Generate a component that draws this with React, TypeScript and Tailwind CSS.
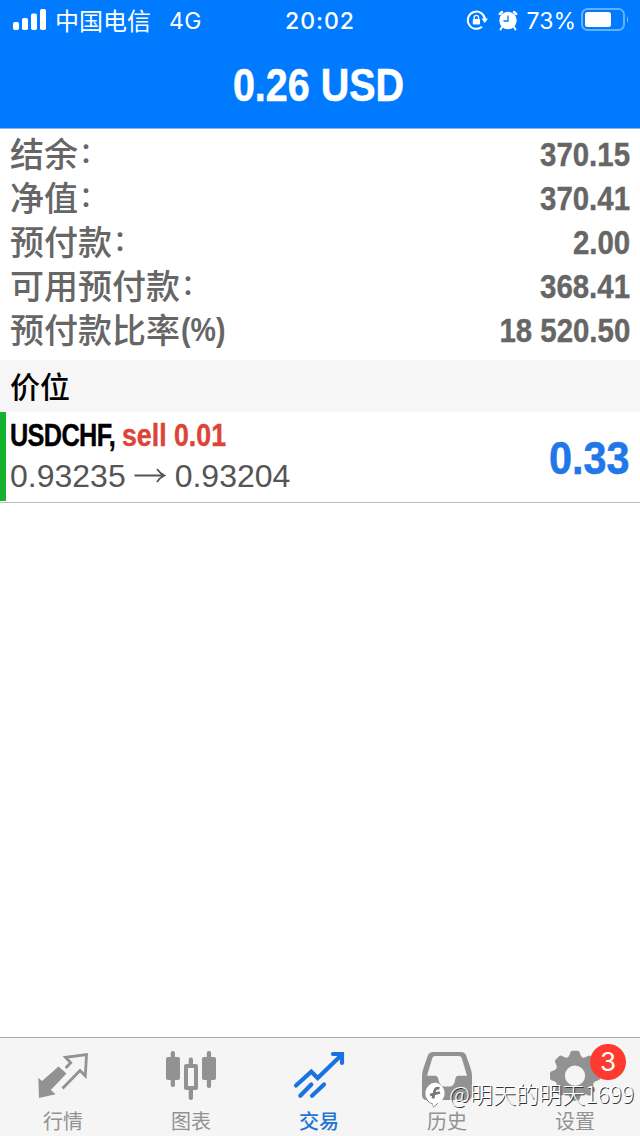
import React from 'react';

const SANS = "font-['Liberation_Sans','Noto_Sans_CJK_SC',sans-serif]";
const GEAR_TEETH = [0, 45, 90, 135, 180, 225, 270, 315];

const balances = [
  { label: '结余', colon: true, value: '370.15' },
  { label: '净值', colon: true, value: '370.41' },
  { label: '预付款', colon: true, value: '2.00' },
  { label: '可用预付款', colon: true, value: '368.41' },
  { label: '预付款比率', colon: false, value: '18 520.50' },
];

const StatusBar: React.FC = () => (
  <div className="flex h-10 items-center justify-between pr-[11px] pl-[13px] text-white">
    <div className="flex w-[230px] items-center">
      <svg width="34" height="22" viewBox="0 0 34 22" fill="currentColor">
        <rect x="0" y="13" width="6" height="8" rx="1.8" />
        <rect x="9" y="9" width="6" height="12" rx="1.8" />
        <rect x="18" y="4.500" width="6" height="16.500" rx="1.800" />
        <rect x="27" y="0" width="6" height="21" rx="1.8" />
      </svg>
      <span className="ml-2 font-['Noto_Sans_CJK_SC',sans-serif] text-[24px] leading-10 whitespace-nowrap">
        中国电信
      </span>
      <span className="mt-0.5 ml-[18px] font-['Inter',sans-serif] text-[23px] leading-10 tracking-[0.5px]">4G</span>
    </div>
    <span className="mt-0.5 -ml-0.5 font-['Inter',sans-serif] text-[23px] leading-10 font-medium tracking-[1px]">20:02</span>
    <div className="flex w-[230px] items-center justify-end">
      <svg width="22" height="22" viewBox="0 0 22 22" fill="none">
        <path d="M19 10.500 A8.600 8.600 0 1 0 16 17.800" stroke="currentColor" strokeWidth="2" />
        <path d="M15.500 9.500 H22 L18.800 14 Z" fill="currentColor" />
        <rect x="6.800" y="10" width="7.200" height="5.500" rx="0.800" fill="currentColor" />
        <path d="M8.200 10.500 V8.500 a2.200 2.200 0 0 1 4.400 0 V10.500" stroke="currentColor" strokeWidth="1.300" />
      </svg>
      <svg className="ml-2.5" width="20" height="21" viewBox="0 0 20 21" fill="none">
        <circle cx="10" cy="10.500" r="8.700" fill="currentColor" />
        <path d="M1.800 4 L4 2 M18.200 4 L16 2" stroke="currentColor" strokeWidth="2.400" strokeLinecap="round" />
        <path d="M4 17 L2.500 19.500 M16 17 L17.500 19.500" stroke="currentColor" strokeWidth="2" strokeLinecap="round" />
        <path d="M10 5.500 V11 H5.500" stroke="#007aff" strokeWidth="1.300" />
      </svg>
      <span className="mt-0.5 ml-[9px] font-['Inter',sans-serif] text-[23px] leading-10">73%</span>
      <svg className="ml-[5px]" width="48" height="24" viewBox="0 0 48 24">
        <rect x="1" y="1" width="42" height="21" rx="5.500" fill="none" stroke="#fff" strokeOpacity="0.400" strokeWidth="2" />
        <rect x="4" y="4" width="26" height="15" rx="2.500" fill="#fff" />
        <path d="M46 8 Q48 11.500 46 15 Z" fill="#fff" fillOpacity="0.500" />
      </svg>
    </div>
  </div>
);

const QuotesIcon = () => (
  <svg width="128" height="66" viewBox="0 0 128 66" fill="none">
    <path d="M38.300 39.700 L42 43 L58.500 28.500 L66.500 35.500 L50.800 52 L55.500 56.300 L39 60 Z" fill="#929292" />
    <path d="M65.700 30 L70.700 24.700 L65.500 19.300 L86.500 16.500 L85.300 38 L80 32.500 L62.500 50.500" stroke="#929292" strokeWidth="2.800" />
  </svg>
);

const ChartsIcon = () => (
  <svg width="128" height="66" viewBox="0 0 128 66" fill="#929292">
    <rect x="42.700" y="13" width="4.300" height="36" rx="2" />
    <rect x="38" y="19" width="14" height="23" rx="2" />
    <rect x="60.700" y="19.500" width="4.300" height="10" rx="2" />
    <rect x="60.700" y="48" width="4.300" height="14" rx="2" />
    <path fillRule="evenodd" d="M58 26 h10 a2 2 0 0 1 2 2 v22 a2 2 0 0 1 -2 2 h-10 a2 2 0 0 1 -2 -2 v-22 a2 2 0 0 1 2 -2 Z M60 30 v18 h6 v-18 Z" />
    <rect x="78.800" y="13" width="4.300" height="37" rx="2" />
    <rect x="74" y="19" width="14" height="23" rx="2" />
  </svg>
);

const TradeIcon = () => (
  <svg width="128" height="66" viewBox="0 0 128 66" fill="none" stroke="#1a73e0" strokeWidth="4.200" strokeLinecap="round">
    <path d="M40 47.500 L55.300 33.700 L61.700 40 L85.500 17" />
    <path d="M77 16 H86 V25" />
    <path d="M44.300 57.700 L55.300 46.500 M56 57.700 L68 46.500" />
  </svg>
);

const HistoryIcon = () => (
  <svg width="128" height="66" viewBox="0 0 128 66">
    <path
      fill="#929292"
      fillRule="evenodd"
      d="M49 14 H77 Q80.500 14 82 17 L86.500 30 Q88 34 88 38 V57 Q88 62 83 62 H43 Q38 62 38 57 V38 Q38 34 39.500 30 L44 17 Q45.500 14 49 14 Z M51 18 Q49 18 48.300 20 L43 37.700 H51 Q53.500 37.700 54 40 Q55.500 48.500 60 48.500 H66 Q70.500 48.500 71.500 40 Q72 37.700 74.500 37.700 H83 L77.700 20 Q77 18 75 18 Z"
    />
  </svg>
);

const SettingsIcon = () => (
  <svg width="128" height="66" viewBox="0 0 128 66">
    <g transform="translate(63 37.700)" fill="#929292">
      {GEAR_TEETH.map((angle) => (
        <path key={angle} transform={`rotate(${angle})`} d="M-9 -17 Q-5.500 -19 -4.800 -23 Q-4.300 -25 -2.500 -25 H2.500 Q4.300 -25 4.800 -23 Q5.500 -19 9 -17 Z" />
      ))}
      <circle r="14.800" fill="none" stroke="#929292" strokeWidth="9.400" />
    </g>
  </svg>
);

const tabs = [
  { label: '行情', Icon: QuotesIcon, active: false },
  { label: '图表', Icon: ChartsIcon, active: false },
  { label: '交易', Icon: TradeIcon, active: true },
  { label: '历史', Icon: HistoryIcon, active: false },
  { label: '设置', Icon: SettingsIcon, active: false, badge: 3 },
];

const TabBar: React.FC = () => (
  <nav className="relative grid h-[99px] grid-cols-5 border-t border-[#adadad] bg-[#f5f5f5]">
    {tabs.map(({ label, Icon, active, badge }) => (
      <div key={label} className="relative flex flex-col items-center">
        <Icon />
        <span
          className={`-mt-px -ml-0.5 font-['Noto_Sans_CJK_SC',sans-serif] text-[20px] leading-9 ${
            active ? 'font-medium text-[#2275d3]' : 'text-[#929292]'
          }`}
        >
          {label}
        </span>
        {badge && (
          <span className="absolute top-1.5 left-[78px] flex size-9 items-center justify-center rounded-full bg-[#ff3b30] font-['Inter',sans-serif] text-[26px] leading-9 text-white">
            {badge}
          </span>
        )}
      </div>
    ))}
    <div className="absolute top-10 left-[423px] flex items-center">
      <svg width="24" height="30" viewBox="0 0 24 30">
        <path d="M3 21 Q6 25 10 26 L10.500 29 L15 25" fill="none" stroke="#777" strokeWidth="1" />
        <path d="M12 4.500 a11 10.800 0 0 1 2 21 L10 28.500 V25.500 A11 10.800 0 0 1 12 4.500 Z" fill="#fff" />
        <path d="M16.500 10.500 Q12.500 9 11.500 13.500 L10 20.500 M7 17 L17 14.500" fill="none" stroke="#777" strokeWidth="2.800" />
      </svg>
      <span className="ml-0.5 font-['Noto_Sans_CJK_SC',sans-serif] text-[23px] leading-7 font-light whitespace-nowrap text-white [text-shadow:1px_1px_0.5px_#333]">
        @明天的明天1699
      </span>
    </div>
  </nav>
);

const App: React.FC = () => {
  return (
    <div className={`flex h-[1136px] w-[640px] flex-col overflow-hidden bg-white ${SANS}`}>
      <header className="h-[129px] border-b border-[#8db6e6] bg-[#007aff]">
        <StatusBar />
        <h1 className="-mt-px -ml-[3px] flex h-[92px] scale-x-[.84] items-center justify-center text-[47px] font-bold text-white [-webkit-text-stroke:0.6px_currentColor]">
          0.26 USD
        </h1>
      </header>

      <section className="h-[231px] pt-0.5 text-[#666]">
        {balances.map(({ label, colon, value }) => (
          <div key={label} className="flex h-11 items-center justify-between px-2.5">
            <div className="flex items-center font-['Noto_Sans_CJK_SC',sans-serif] text-[34px] leading-11 font-medium whitespace-nowrap">
              {label}
              {colon ? (
                <span className="-mt-1 ml-px text-[28px] leading-10">：</span>
              ) : (
                <span className="ml-px origin-left scale-x-[.84] font-['Liberation_Sans',sans-serif] text-[34px] leading-11 font-bold">(%)</span>
              )}
            </div>
            <span className="origin-right scale-x-[.865] pt-0.5 text-[34px] leading-10 font-bold whitespace-nowrap [-webkit-text-stroke:0.4px_currentColor]">
              {value}
            </span>
          </div>
        ))}
      </section>

      <div className="flex h-[52px] items-center bg-[#f6f6f6] pb-0.5 pl-2.5 font-['Noto_Sans_CJK_SC',sans-serif] text-[30px] font-medium text-black">
        价位
      </div>

      <div className="flex h-[91px] items-center justify-between border-b border-[#bdbdbd] pr-[11px]">
        <div className="flex h-full items-center">
          <div className="h-[89px] w-1.5 self-start bg-[#15b32d]" />
          <div className="-mt-0.5 ml-1">
            <div className="flex h-10 items-center text-[32px] leading-10 font-bold whitespace-nowrap">
              <span className="w-[112px] origin-left scale-x-[.79] tracking-[-0.8px] text-black [-webkit-text-stroke:0.4px_currentColor]">
                USDCHF,
              </span>
              <span className="origin-left scale-x-[.835] text-[#dc4437] [-webkit-text-stroke:0.4px_currentColor]">sell 0.01</span>
            </div>
            <div className="flex h-[42px] items-center text-[32px] text-[#555]">
              <span>0.93235</span>
              <svg className="mx-[8.500px]" width="32" height="18" viewBox="0 0 32 18" fill="none" stroke="currentColor" strokeWidth="1.800">
                <path d="M0.500 8.500 H30 M23 2 Q26 6.500 30.500 8.500 Q26 10.500 23 15" />
              </svg>
              <span>0.93204</span>
            </div>
          </div>
        </div>
        <span className="origin-right scale-x-[.88] pt-0.5 text-[47px] font-bold text-[#1f77e8] [-webkit-text-stroke:0.6px_currentColor]">0.33</span>
      </div>

      <main className="flex-1" />
      <TabBar />
    </div>
  );
};

export default App;
